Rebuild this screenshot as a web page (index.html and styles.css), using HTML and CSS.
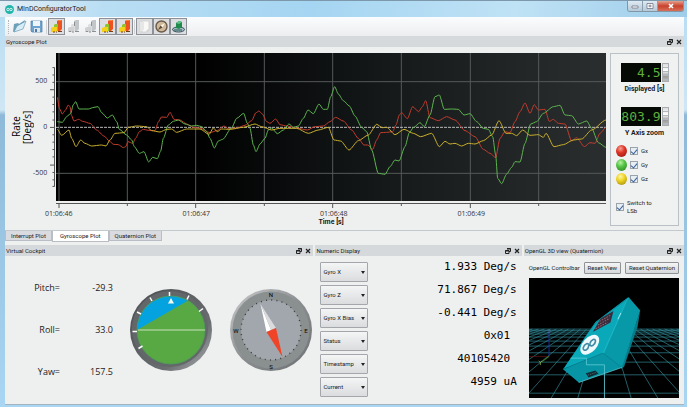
FILE: index.html
```html
<!DOCTYPE html>
<html lang="en">
<head>
  <meta charset="utf-8">
  <title>MInDConfiguratorTool</title>
  <link rel="stylesheet" href="styles.css">
</head>
<body>
  <!-- shared icons -->
  <svg class="defs" width="0" height="0">
    <defs>
      <symbol id="bars" viewBox="0 0 15 15">
        <path fill="#f0521f" d="M8 2l2-1h3v9l-2 2H8z"/>
        <path fill="#ff8440" d="M8 2l2-1h3l-1 1z"/>
        <path fill="#8cc62e" d="M5 6l1-1h3v7H5z"/>
        <path fill="#f4d21c" d="M2 9l2-1h4v4l-1 1H2z"/>
        <path stroke="#7a3d12" stroke-width="1" d="M4 13h2M7 13h1M9 12.500h4" fill="none"/>
      </symbol>
      <symbol id="bars-off" viewBox="0 0 15 15">
        <path fill="#c3c6c8" d="M8 2l2-1h3v9l-2 2H8z"/>
        <path fill="#dcdedf" d="M5 6l1-1h3v7H5z"/>
        <path fill="#cfd1d3" d="M2 9l2-1h4v4l-1 1H2z"/>
        <path stroke="#8d9093" d="M3 12.500h2M6 13h2M9 12.500h4M8.500 3v4" fill="none"/>
      </symbol>
      <symbol id="float" viewBox="0 0 6 6">
        <path fill="none" stroke="#222" d="M2 .5h3.500v3H4M.5 2.500h3.500v3H.5z"/>
        <path stroke="#222" d="M2 1h4M0 3h4"/>
      </symbol>
      <symbol id="close" viewBox="0 0 6 6">
        <path stroke="#222" stroke-width="1.200" d="M1 1l4 4M5 1L1 5"/>
      </symbol>
    </defs>
  </svg>

  <header class="titlebar">
    <svg class="logo" viewBox="0 0 8 8"><circle cx="4" cy="4" r="4" fill="#1fb5a9"/><circle cx="2.700" cy="4" r="1.100" fill="none" stroke="#fff" stroke-width=".7"/><circle cx="5.300" cy="4" r="1.100" fill="none" stroke="#fff" stroke-width=".7"/></svg>
    <h1>MInDConfiguratorTool</h1>
    <div class="window-buttons">
      <button aria-label="Minimize"><svg viewBox="0 0 8 6"><path fill="#fff" stroke="#667" stroke-width=".7" d="M1 3h6v2H1z"/></svg></button>
      <button aria-label="Maximize"><svg viewBox="0 0 8 6"><path fill="#fff" stroke="#667" stroke-width=".7" d="M1 .5h6v5H1zM3 2.200h2v1.500H3z"/></svg></button>
      <button class="win-close" aria-label="Close"><svg viewBox="0 0 8 6"><path stroke="#fff" stroke-width="1.600" d="M2 1l4 4M6 1L2 5"/></svg></button>
    </div>
  </header>

  <main class="client">
    <div class="toolbar">
      <span class="grip"></span>
      <button class="tool" aria-label="Open">
        <svg viewBox="0 0 15 15"><path fill="#6d9fb8" d="M1 13l1-8 4-1 1 1 6-4-2 8z"/><path fill="#d7ecf6" stroke="#5590ad" stroke-width=".6" d="M2 13l3-6 9-5-3 8z"/></svg>
      </button>
      <button class="tool" aria-label="Save">
        <svg viewBox="0 0 15 15"><path fill="#6fa3cf" stroke="#4b7ba6" stroke-width=".7" d="M2 2h11v11H3l-1-1z"/><path fill="#eef4f8" d="M4 2h7v5H4z"/><path fill="#dfe7ec" d="M5 9h6v4H5z"/><path fill="#4b7ba6" d="M6 10h2v3H6z"/></svg>
      </button>
      <span class="separator"></span>
      <button class="tool pressed" aria-label="Plot 1"><svg><use href="#bars"/></svg></button>
      <button class="tool" aria-label="Plot 2"><svg><use href="#bars-off"/></svg></button>
      <button class="tool" aria-label="Plot 3"><svg><use href="#bars-off"/></svg></button>
      <button class="tool pressed" aria-label="Plot 4"><svg><use href="#bars"/></svg></button>
      <button class="tool pressed" aria-label="Plot 5"><svg><use href="#bars"/></svg></button>
      <span class="separator"></span>
      <button class="tool pressed" aria-label="Numeric display">
        <svg viewBox="0 0 15 15"><path fill="#f8f8f6" stroke="#c9cbc9" stroke-width=".7" d="M3 2h9v9l-2 2H3z"/><path stroke="#c4c7c7" stroke-width=".7" fill="none" d="M5 2v11M6 4h1M6 6h1M6 8h1M6 10h1M12 11h-2v2"/></svg>
      </button>
      <button class="tool pressed" aria-label="Cockpit">
        <svg viewBox="0 0 15 15"><circle cx="7.500" cy="7.500" r="5.500" fill="#cdb99c" stroke="#6d5a45" stroke-width="1.400"/><path fill="#fff3df" d="M11 4L8.500 8.500l-2-2z"/><path fill="#5d4735" d="M4 11l2.500-4.500 2 2z"/></svg>
      </button>
      <button class="tool pressed" aria-label="3D view">
        <svg viewBox="0 0 15 15"><ellipse cx="7.500" cy="10.500" rx="6" ry="2.500" fill="#a9bcc6" stroke="#35505c"/><path fill="#1f8a4c" d="M5 4l3-2 3 1v5l-3 2-3-1z"/><path fill="#63c288" d="M5 4l3-2 3 1-3 2z"/><path stroke="#1e5b49" d="M3 11h8" fill="none"/></svg>
      </button>
    </div>

    <section class="dock">
      <div class="dock-title">
        <h2>Gyroscope Plot</h2>
        <button aria-label="Float"><svg><use href="#float"/></svg></button>
        <button aria-label="Close"><svg><use href="#close"/></svg></button>
      </div>
      <div class="plot-panel">
        <div class="plot">
          <div class="y-axis">
            <div class="y-title">Rate<br>[Deg/s]</div>
            <div class="y-labels"><span>500</span><span>0</span><span>-500</span></div>
            <svg class="y-ticks" viewBox="0 0 7 148">
              <path d="M5.500 1v146M3 1.500h2M3 10.500h2M3 19.500h2M0 28.500h5M3 37.500h2M3 46.500h2M3 55.500h2M3 65.500h2M0 74.500h5M3 83.500h2M3 92.500h2M3 101.500h2M3 110.500h2M0 120.500h5M3 129.500h2M3 138.500h2M3 146.500h2"/>
            </svg>
          </div>
          <svg class="chart" viewBox="168 39 1650 444" preserveAspectRatio="none">
            <path class="grid-line" d="M168 125h1650M168 400h1650M177 39v444M382 39v444M587 39v444M793 39v444M998 39v444M1204 39v444M1411 39v444M1616 39v444"/>
            <path class="zero-line" d="M168 262h1650"/>
            <g id="traces"></g>
          </svg>
          <div class="x-axis">
            <svg class="x-ticks" viewBox="168 0 1650 5" preserveAspectRatio="none">
              <path d="M168 .5h1650M177 0v5M382 0v3M587 0v5M793 0v3M998 0v5M1204 0v3M1411 0v5M1616 0v3"/>
            </svg>
            <div class="x-labels"><span>01:06:46</span><span>01:06:47</span><span>01:06:48</span><span>01:06:49</span></div>
            <div class="x-title">Time [s]</div>
          </div>
        </div>

        <div class="plot-options">
          <div class="lcd-row">
            <output class="lcd" id="displayed">4.5</output>
            <input class="wheel" type="range" aria-labelledby="displayed-label">
          </div>
          <div class="lcd-label" id="displayed-label">Displayed [s]</div>
          <div class="lcd-row">
            <output class="lcd" id="zoom">803.9</output>
            <input class="wheel" type="range" aria-labelledby="zoom-label">
          </div>
          <div class="lcd-label" id="zoom-label">Y Axis zoom</div>
          <div class="series">
            <label><span class="led red"></span><input type="checkbox" checked>Gx</label>
            <label><span class="led green"></span><input type="checkbox" checked>Gy</label>
            <label><span class="led yellow"></span><input type="checkbox" checked>Gz</label>
          </div>
          <label class="lsb"><input type="checkbox" checked><span>Switch to LSb</span></label>
        </div>
      </div>
    </section>

    <nav class="tabs">
      <button>Interrupt Plot</button>
      <button class="active">Gyroscope Plot</button>
      <button>Quaternion Plot</button>
    </nav>

    <div class="bottom">
      <section class="dock">
        <div class="dock-title">
          <h2>Virtual Cockpit</h2>
          <button aria-label="Float"><svg><use href="#float"/></svg></button>
          <button aria-label="Close"><svg><use href="#close"/></svg></button>
        </div>
        <div class="cockpit">
          <dl class="angles">
            <dt>Pitch=</dt><dd>-29.3</dd>
            <dt>Roll=</dt><dd>33.0</dd>
            <dt>Yaw=</dt><dd>157.5</dd>
          </dl>
          <svg class="gauge" viewBox="-42 -42 84 84">
            <defs>
              <linearGradient id="rim" x1="0" y1="0" x2="1" y2="1"><stop offset="0" stop-color="#4b4e50"/><stop offset=".7" stop-color="#6b6e70"/><stop offset="1" stop-color="#b0b3b5"/></linearGradient>
            </defs>
            <circle r="41" fill="url(#rim)"/>
            <circle cx="-1" cy="-1" r="38" fill="#63676a"/>
            <circle r="34" fill="#58a843"/>
            <path fill="#04a3e0" d="M-34 0A34 34 0 0 1 17 -29.400z"/>
            <circle r="34" fill="none" stroke="#4c9d58" stroke-width=".8"/>
            <path stroke="#e4f0dc" stroke-width=".8" d="M-33 0h67"/>
            <path fill="#f4fbf0" d="M0 -32l3 5.500h-6z"/>
            <path stroke="#fff" stroke-width="1.500" d="M-1.500 -38v4M18 -34.500l-2 4M32 -21.500l-4 3M-21 -32.500l2 3.500M-34 -18l4 2M-38.500 1.500h4.500M-32.500 18.500l4 -2.500"/>
          </svg>
          <svg class="gauge" viewBox="-42 -42 84 84">
            <defs>
              <linearGradient id="bezel" x1="0" y1="0" x2="1" y2="1"><stop offset="0" stop-color="#c9cbcc"/><stop offset=".5" stop-color="#8b8e90"/><stop offset="1" stop-color="#6d7072"/></linearGradient>
            </defs>
            <circle r="41" fill="url(#bezel)"/>
            <circle r="38.500" fill="#8a8f90"/>
            <circle r="30" fill="#a2a7ae"/>
            <circle r="30" fill="none" stroke="#3b3e40" stroke-width="1.400" stroke-dasharray="1 4.236"/>
            <g class="compass-text"><text y="-33.500">N</text><text x="35" y="2.500">E</text><text y="38.500">S</text><text x="-35" y="2.500">W</text></g>
            <path fill="#fff" d="M-10.500 -26L-4.500 2 0 0z"/>
            <path fill="#d9dbdc" d="M-10.500 -26L5 -2 0 0z"/>
            <path fill="#ef4427" d="M11.500 27L-4.500 2 5 -2z"/>
          </svg>
        </div>
      </section>

      <section class="dock">
        <div class="dock-title">
          <h2>Numeric Display</h2>
          <button aria-label="Float"><svg><use href="#float"/></svg></button>
          <button aria-label="Close"><svg><use href="#close"/></svg></button>
        </div>
        <div class="numeric">
          <div class="reading"><span class="combo"><select aria-label="Channel 1"><option>Gyro X</option></select></span><output>1.933 Deg/s</output></div>
          <div class="reading"><span class="combo"><select aria-label="Channel 2"><option>Gyro Z</option></select></span><output>71.867 Deg/s</output></div>
          <div class="reading"><span class="combo"><select aria-label="Channel 3"><option>Gyro X Bias</option></select></span><output>-0.441 Deg/s</output></div>
          <div class="reading"><span class="combo"><select aria-label="Channel 4"><option>Status</option></select></span><output>0x01&nbsp;</output></div>
          <div class="reading"><span class="combo"><select aria-label="Channel 5"><option>Timestamp</option></select></span><output>40105420&nbsp;</output></div>
          <div class="reading"><span class="combo"><select aria-label="Channel 6"><option>Current</option></select></span><output>4959 uA</output></div>
        </div>
      </section>

      <section class="dock">
        <div class="dock-title">
          <h2>OpenGL 3D view (Quaternion)</h2>
          <button aria-label="Float"><svg><use href="#float"/></svg></button>
          <button aria-label="Close"><svg><use href="#close"/></svg></button>
        </div>
        <div class="opengl">
          <div class="controlbar">
            <span>OpenGL Controlbar</span>
            <button>Reset View</button>
            <button>Reset Quaternion</button>
          </div>
          <svg class="scene" viewBox="0 0 450 360" preserveAspectRatio="xMidYMid slice">
            <g id="floor" fill="none" stroke="#348e9b" stroke-width="2"></g>
            <path d="M60 235V160" stroke="#1c2f9c" stroke-width="3"/>
            <path d="M0 235h60" stroke="#6b1414" stroke-width="2"/>
            <path d="M60 235l-22 16" stroke="#4d7c20" stroke-width="3"/>
            <path d="M29 248l5 5 5-5M34 253v8" stroke="#b4c94a" stroke-width="2" fill="none"/>
            <path d="M56 156h8l-8 8h8" stroke="#5a78a8" stroke-width="2" fill="none"/>
            <!-- sensor box: back edge, side, front, end -->
            <path fill="#067b89" d="M333 97l-8 50-40 118-10 8z"/>
            <path fill="#0899a9" d="M298 57l35 40-55 173-58-43z"/>
            <path fill="#0aa9ba" d="M102 273l97-141 99-75-72 168z"/>
            <path fill="#0795a5" d="M102 273l118-48 58 43-129 45z"/>
            <path fill="none" stroke="#067a89" stroke-width="2" d="M102 273l120-48 56 43M184 156l18-24 90-68"/>
            <path fill="none" stroke="#25bccb" stroke-width="2" d="M222 225l74-164"/>
            <path fill="#3b2c3d" d="M214 122l39-23-9 34-53 29z"/>
            <path stroke="#8f5f68" stroke-width="3" stroke-dasharray="5 3" d="M211 130l34-19M206 141l35-20M199 152l36-19"/>
            <ellipse cx="182" cy="200" rx="21" ry="35" transform="rotate(42 182 200)" fill="#eef9fb"/>
            <path fill="none" stroke="#3e8ba3" stroke-width="5" d="M162 210c4-14 18-18 17-7s-15 20-17 7M182 197c4-14 18-18 17-7s-15 20-17 7"/>
            <path stroke="#9be6ec" stroke-width="3" d="M275 105l-9 19"/>
            <path fill="#0f2f38" d="M170 285l29-8 9 10-30 11z"/>
            <path stroke="#6f7475" stroke-width="2" stroke-dasharray="4 3" d="M176 291l24-8"/>
            <path fill="none" stroke="#6fd3dc" stroke-width="2" d="M124 240h48v20h54v100M149 313l129-45"/>
          </svg>
        </div>
      </section>
    </div>
  </main>

  <script src="plot.js"></script>
</body>
</html>
```

FILE: styles.css
```css
* {
  box-sizing: border-box;
}

body {
  margin: 0;
  min-height: 100vh;
  display: flex;
  flex-direction: column;
  padding: 0 3px 4px 5px;
  font-family: Roboto, "Open Sans", sans-serif;
  font-size: 6px;
  line-height: 8px;
  color: #1c1c1c;
  background: linear-gradient(#b5dcf2, #cfe6f5 110px, #8fb9d8 115px, #a9d6f2);
}

h1, h2, dl, dd {
  margin: 0;
  font-weight: normal;
}

button, input, select {
  margin: 0;
  padding: 0;
  border: 0;
  font: inherit;
  color: inherit;
  background: none;
}

svg {
  display: block;
}

.defs {
  position: absolute;
}

/* title bar */
.titlebar {
  display: flex;
  align-items: center;
  height: 17px;
  margin: 0 -3px 0 -5px;
  padding-left: 5px;
  background: linear-gradient(100deg, #e4eef5, #b9def4 15%, #a5d5f2 45%, #bfe2f5 75%, #9ecdea);
  border-top: 1px solid #7d98aa;
}

.titlebar h1 {
  flex: 1;
  font-size: 7px;
}

.logo {
  width: 9px;
  height: 9px;
  margin-right: 3px;
}

.window-buttons {
  display: flex;
  align-self: flex-start;
  margin-right: 3px;
  border: 1px solid #8297a6;
  border-top: 0;
  border-radius: 0 0 3px 3px;
  overflow: hidden;
}

.window-buttons button {
  display: grid;
  place-items: center;
  width: 15px;
  height: 10px;
  border-right: 1px solid #8aa0b0;
  background: linear-gradient(#dfeaf2, #b5c9d8);
}

.window-buttons svg {
  width: 8px;
  height: 6px;
}

.window-buttons .win-close {
  width: 25px;
  border: 0;
  background: linear-gradient(#e6a08f, #c8422d 50%, #d8705a);
}

.client {
  flex: 1;
  display: flex;
  flex-direction: column;
  background: #eeefef;
  border-bottom: 1px solid #a5b4bf;
}

/* toolbar */
.toolbar {
  display: flex;
  align-items: center;
  height: 19px;
  padding-left: 3px;
  background: linear-gradient(#fbfcfd, #eceeef);
}

.grip {
  width: 3px;
  height: 14px;
  border-left: 1px dotted #b4b8bb;
}

.tool {
  display: grid;
  place-items: center;
  width: 17px;
  height: 17px;
  border: 1px solid transparent;
}

.tool svg {
  width: 15px;
  height: 15px;
}

.tool.pressed {
  border-color: #8d9196;
  background: #dcdee1;
}

.separator {
  width: 1px;
  height: 14px;
  margin: 0 1px;
  background: #d0d3d5;
}

/* dock panels */
.dock {
  display: flex;
  flex-direction: column;
  min-width: 0;
}

.dock-title {
  display: flex;
  align-items: center;
  height: 11px;
  padding-right: 2px;
  background: #d5d9dc;
}

.dock-title h2 {
  flex: 1;
  padding-left: 1px;
  font-size: 6px;
}

.dock-title button {
  width: 6px;
  height: 6px;
  margin-left: 3px;
}

.dock-title svg {
  width: 6px;
  height: 6px;
}

.plot-panel {
  display: flex;
  gap: 4px;
  padding: 6px 5px 4px 0;
  border-bottom: 1px solid #c3c9cd;
}

.plot {
  flex: 1;
  display: grid;
  grid-template-columns: 51px 1fr;
  font-family: "Open Sans", sans-serif;
  font-size: 7px;
}

.y-axis {
  display: flex;
  height: 148px;
  padding-left: 6px;
}

.y-title {
  width: 22px;
  writing-mode: vertical-rl;
  transform: rotate(180deg);
  text-align: center;
  font-size: 10px;
  line-height: 11px;
  color: #000;
}

.y-labels {
  flex: 1;
  display: flex;
  flex-direction: column;
  justify-content: center;
  gap: 36px;
  padding-right: 3px;
  text-align: right;
  line-height: 10px;
  color: #333;
}

.y-ticks {
  width: 7px;
  height: 148px;
}

.y-ticks path,
.x-ticks path {
  fill: none;
  stroke: #555;
  stroke-width: 1px;
  vector-effect: non-scaling-stroke;
}

.chart {
  width: 100%;
  height: 148px;
  background: linear-gradient(90deg, #000 25%, #15191a 60%, #2b2e2f);
}

.chart path {
  fill: none;
  stroke-linejoin: round;
  vector-effect: non-scaling-stroke;
}

.grid-line {
  stroke: #55585a;
}

.zero-line {
  stroke: #b8b8b8;
  stroke-dasharray: 3 1;
}

.trace-red {
  stroke: #c43c2d;
}

.trace-green {
  stroke: #5db54e;
}

.trace-yellow {
  stroke: #c9af2c;
}

.x-axis {
  grid-column: 2;
  padding-top: 2px;
}

.x-ticks {
  width: 100%;
  height: 5px;
}

.x-labels {
  display: grid;
  grid-template-columns: repeat(4, 1fr);
  margin: 2px 12% 0 -12%;
  text-align: center;
  color: #333;
}

.x-title {
  text-align: center;
  font-family: Roboto, sans-serif;
  font-weight: bold;
}

/* plot options */
.plot-options {
  display: flex;
  flex-direction: column;
  width: 69px;
  padding: 9px 5px 10px;
  border: 1px solid #b9c0c6;
  background: #f0f1f1;
}

.lcd-row {
  display: flex;
  gap: 1px;
  justify-content: center;
}

.lcd {
  width: 40px;
  height: 19px;
  font-family: "DejaVu Sans Mono", monospace;
  font-size: 13px;
  line-height: 19px;
  text-align: right;
  color: #5fae3c;
  background: #050a05;
}

.wheel {
  appearance: none;
  width: 7px;
  height: 19px;
  border: 1px solid #a9adb1;
  background: repeating-linear-gradient(transparent 0 3px, #b4b8bb 3px 4px), linear-gradient(#ddd, #fff 40%, #999 70%, #bbb);
}

.wheel::-webkit-slider-thumb {
  appearance: none;
}

.lcd-label {
  margin: 3px 0 13px;
  text-align: center;
  font-size: 7px;
  line-height: 9px;
  font-weight: bold;
}

.series {
  display: grid;
  gap: 2px;
  margin-top: -6px;
}

.series label,
.lsb {
  display: flex;
  align-items: center;
  gap: 3px;
}

.led {
  width: 11px;
  height: 12px;
  border-radius: 50%;
}

.led.red {
  background: radial-gradient(circle at 40% 30%, #f6a090, #dd3326 40%, #8c150e);
}

.led.green {
  background: radial-gradient(circle at 40% 30%, #b6f2a0, #53c244 40%, #277a1e);
}

.led.yellow {
  background: radial-gradient(circle at 40% 30%, #fff6a0, #eed222 40%, #93800e);
}

input[type="checkbox"] {
  appearance: none;
  display: grid;
  place-items: center;
  width: 8px;
  height: 8px;
  border: 1px solid #9aa3aa;
  background: #e6edf3;
}

input[type="checkbox"]:checked::before {
  content: "";
  width: 3px;
  height: 5px;
  border: solid #3a5f9a;
  border-width: 0 1px 1px 0;
  transform: rotate(40deg);
}

.lsb {
  margin-top: auto;
}

.lsb span {
  width: 28px;
}

/* tabs */
.tabs {
  display: flex;
  height: 11px;
  margin-bottom: 3px;
}

.tabs button {
  height: 10px;
  padding: 0 5px;
  border: 1px solid #b9bdc4;
  border-top: 0;
  background: #d9dbe1;
}

.tabs .active {
  height: 11px;
  padding: 0 7px;
  background: #fff;
}

/* bottom row */
.bottom {
  flex: 1;
  display: grid;
  grid-template-columns: 308fr 206fr 160fr;
  gap: 2px;
}

.cockpit {
  flex: 1;
  display: flex;
  align-items: center;
  gap: 16px;
}

.angles {
  display: grid;
  grid-template-columns: 55px 37px;
  gap: 30px 16px;
  font-family: "Open Sans", sans-serif;
  font-size: 9px;
  line-height: 12px;
  text-align: right;
}

.gauge {
  width: 84px;
  height: 84px;
}

.compass-text {
  font: 6px Roboto, sans-serif;
  text-anchor: middle;
}

.numeric {
  display: grid;
  gap: 3px;
  padding: 6px 5px 0;
}

.reading {
  display: flex;
  justify-content: space-between;
}

.reading output {
  font-family: "DejaVu Sans Mono", monospace;
  font-size: 11px;
  line-height: 9px;
  color: #000;
}

.combo {
  position: relative;
}

.combo::after {
  content: "";
  position: absolute;
  top: 9px;
  right: 3px;
  border: 2px solid transparent;
  border-top: 3px solid #222;
  border-bottom: 0;
  pointer-events: none;
}

.combo select {
  appearance: none;
  display: block;
  width: 48px;
  height: 20px;
  padding-left: 2px;
  border: 1px solid #a3a7ab;
  border-radius: 1px;
  background: linear-gradient(#f4f5f5, #dadcde);
}

.opengl {
  flex: 1;
  display: flex;
  flex-direction: column;
  padding: 6px 5px;
}

.controlbar {
  display: flex;
  align-items: center;
  justify-content: space-between;
  margin-bottom: 4px;
}

.controlbar button {
  height: 12px;
  padding: 0 3px;
  border: 1px solid #8f9396;
  border-radius: 1px;
  background: linear-gradient(#f4f5f5, #d6d8da);
}

.scene {
  flex: 1;
  width: 100%;
  min-height: 120px;
  background: #000;
}
```

FILE: plot.js
```js
// trace points as x, y pairs in chart units
const traces = {
  red: [172,172, 178,205, 187,222, 195,212, 205,195, 210,200, 214,225, 222,243, 236,238, 248,244, 270,250, 290,270, 312,288, 328,303, 340,313, 355,314, 370,323, 377,320, 384,305, 398,310, 408,293, 418,275, 430,268, 445,271, 465,272, 475,246, 484,231, 500,232, 510,217, 522,238, 540,240, 560,252, 580,262, 600,264, 630,278, 650,272, 672,258, 685,266, 710,264, 735,256, 755,242, 768,218, 777,213, 787,222, 800,245, 810,250, 827,237, 840,254, 860,258, 890,264, 922,270, 945,260, 970,258, 990,245, 1007,232, 1030,243, 1055,270, 1075,295, 1092,315, 1103,315, 1118,328, 1130,300, 1142,278, 1160,277, 1178,275, 1188,255, 1198,225, 1205,218, 1222,236, 1238,200, 1256,215, 1267,200, 1277,182, 1290,233, 1315,242, 1340,230, 1365,240, 1395,272, 1425,290, 1450,328, 1470,340, 1487,353, 1500,295, 1515,275, 1530,278, 1545,245, 1560,215, 1575,189, 1590,220, 1603,194, 1615,210, 1635,208, 1648,244, 1660,238, 1675,250, 1695,252, 1715,303, 1730,293, 1753,320, 1770,308, 1785,310, 1800,280, 1818,262],
  green: [172,245, 187,247, 200,230, 212,220, 220,194, 227,185, 237,207, 265,207, 282,202, 294,200, 305,218, 322,234, 337,225, 350,245, 358,268, 380,285, 395,300, 403,320, 418,340, 432,335, 446,366, 458,352, 472,356, 482,333, 490,295, 505,255, 520,244, 535,240, 555,252, 575,258, 590,256, 605,260, 620,275, 630,295, 643,324, 655,303, 668,298, 695,263, 710,235, 731,220, 742,250, 750,265, 760,315, 768,335, 780,312, 795,295, 805,270, 815,264, 832,281, 850,270, 867,252, 880,262, 895,258, 910,235, 924,210, 940,221, 957,192, 970,208, 982,208, 992,170, 1004,140, 1015,162, 1030,182, 1048,198, 1065,228, 1085,262, 1100,275, 1115,330, 1135,400, 1155,403, 1170,380, 1185,360, 1197,363, 1215,320, 1228,278, 1240,263, 1260,248, 1273,260, 1290,225, 1305,170, 1318,165, 1333,208, 1355,207, 1375,208, 1392,225, 1410,221, 1430,245, 1450,265, 1465,268, 1478,290, 1487,345, 1493,415, 1505,431, 1520,402, 1535,382, 1545,365, 1560,366, 1575,310, 1592,252, 1610,245, 1630,220, 1660,200, 1680,196, 1695,225, 1715,227, 1735,252, 1760,243, 1775,265, 1795,308, 1818,322],
  yellow: [172,268, 185,286, 207,270, 215,295, 228,320, 242,300, 255,310, 275,318, 305,315, 318,318, 330,300, 345,280, 372,278, 385,262, 410,258, 440,260, 455,272, 480,276, 500,268, 515,267, 530,277, 560,267, 600,267, 627,283, 640,264, 652,275, 665,267, 690,268, 730,262, 765,252, 785,260, 815,270, 840,265, 890,265, 925,280, 955,270, 985,262, 1002,300, 1022,303, 1047,330, 1075,302, 1105,285, 1130,253, 1147,263, 1160,262, 1185,284, 1212,268, 1240,280, 1262,290, 1295,280, 1318,320, 1335,304, 1350,312, 1365,310, 1385,318, 1405,310, 1425,312, 1450,302, 1475,285, 1497,242, 1518,280, 1535,280, 1550,287, 1568,270, 1590,286, 1615,284, 1630,292, 1638,280, 1662,320, 1690,314, 1720,300, 1745,297, 1775,270, 1818,240]
};

const svgNS = 'http://www.w3.org/2000/svg';

function addPath(parent, d, className) {
  const path = document.createElementNS(svgNS, 'path');
  path.setAttribute('d', d);
  if (className) path.setAttribute('class', className);
  parent.appendChild(path);
}

// horizontal tangent handles keep the peaks where the samples are
function smooth(p) {
  let d = `M${p[0]} ${p[1]}`;
  for (let i = 2; i < p.length; i += 2) {
    const h = (p[i] - p[i - 2]) / 4;
    d += `C${p[i - 2] + h} ${p[i - 1]} ${p[i] - h} ${p[i + 1]} ${p[i]} ${p[i + 1]}`;
  }
  return d;
}

for (const name in traces) {
  addPath(document.getElementById('traces'), smooth(traces[name]), 'trace-' + name);
}

// perspective floor of the 3D view
let floor = '';
for (const y of [153, 157, 162, 168, 177, 189, 204, 224, 252, 290, 345]) {
  floor += `M0 ${y}H450`;
}
for (let i = -16; i <= 16; i++) {
  floor += `M${226 + i * 18} 153L${226 + i * 80} 360`;
}
addPath(document.getElementById('floor'), floor);
```
